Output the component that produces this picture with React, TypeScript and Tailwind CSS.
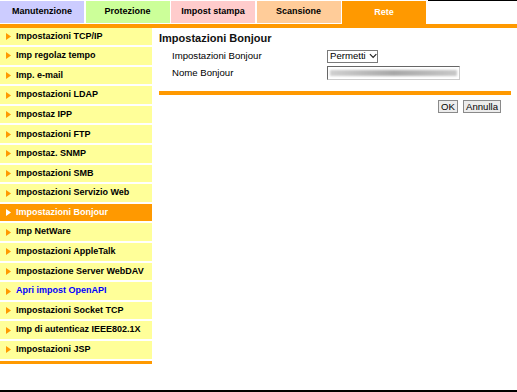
import React from 'react'

const TABS = [
  { label: 'Manutenzione', bg: 'bg-[#ccccff]', active: false },
  { label: 'Protezione', bg: 'bg-[#ccff99]', active: false },
  { label: 'Impost stampa', bg: 'bg-[#ffcccc]', active: false },
  { label: 'Scansione', bg: 'bg-[#ffcc99]', active: false },
  { label: 'Rete', bg: 'bg-[#ff9900]', active: true },
]

const MENU = [
  'Impostazioni TCP/IP',
  'Imp regolaz tempo',
  'Imp. e-mail',
  'Impostazioni LDAP',
  'Impostaz IPP',
  'Impostazioni FTP',
  'Impostaz. SNMP',
  'Impostazioni SMB',
  'Impostazioni Servizio Web',
  'Impostazioni Bonjour',
  'Imp NetWare',
  'Impostazioni AppleTalk',
  'Impostazione Server WebDAV',
  'Apri impost OpenAPI',
  'Impostazioni Socket TCP',
  'Imp di autenticaz IEEE802.1X',
  'Impostazioni JSP',
]

function Arrow({ color }: { color: string }) {
  return (
    <svg width="5" height="7" viewBox="0 0 5 7" className="shrink-0">
      <polygon points="0,0 5,3.5 0,7" fill={color} />
    </svg>
  )
}

function MenuItem({ label }: { label: string }) {
  const active = label === 'Impostazioni Bonjour'
  const link = label === 'Apri impost OpenAPI'
  return (
    <div
      className={`flex items-center h-[17.6px] mb-[2px] pl-[6px] ${
        active ? 'bg-[#ff9900]' : 'bg-[#ffff99]'
      }`}
    >
      <Arrow color={active ? '#ffffff' : '#ff9900'} />
      <span
        className={`ml-[5px] text-[9px] font-bold whitespace-nowrap ${
          active ? 'text-white' : link ? 'text-[#0000ff]' : 'text-black'
        }`}
      >
        {label}
      </span>
    </div>
  )
}

export default function App() {
  return (
    <div
      className="w-[517px] h-[392px] bg-white flex flex-col border-b-2 border-black overflow-hidden"
      style={{ fontFamily: '"Liberation Sans", Arial, sans-serif' }}
    >
      {/* Top tabs */}
      <div className="flex h-[24px] gap-[1.5px]">
        {TABS.map((t) => (
          <div
            key={t.label}
            className={`w-[84px] mt-[1px] flex items-center justify-center text-[9px] font-bold ${t.bg} ${
              t.active ? 'h-[23px] text-white' : 'h-[22px] text-black'
            }`}
          >
            {t.label}
          </div>
        ))}
        <div className="flex-1 border-t border-black" />
      </div>
      <div className="h-[3.5px] bg-[#ff9900]" />

      <div className="flex flex-1">
        {/* Sidebar */}
        <div className="w-[152px] flex flex-col">
          {MENU.map((m) => (
            <MenuItem key={m} label={m} />
          ))}
          <div className="h-[3px] mt-[0.5px] bg-[#ff9900]" />
        </div>

        {/* Content */}
        <div className="flex-1 pl-[7px] pr-[6px]">
          <div className="mt-[3px] h-[16px] flex items-center text-[11px] font-bold text-[#111]">
            Impostazioni Bonjour
          </div>
          <div className="mt-[2.5px] flex flex-col gap-[3px] pl-[13px] text-[9.6px] text-black">
            <div className="flex items-center h-[14px]">
              <div className="w-[155px]">Impostazioni Bonjour</div>
              <div className="h-[13px] w-[51px] border border-[#7a7a7a] bg-white flex items-center pl-[2px] text-[9.6px]">
                <span>Permetti</span>
                <svg width="9" height="6" viewBox="0 0 9 6" className="ml-[3px]">
                  <polyline points="1,1 4.5,4.5 8,1" fill="none" stroke="#222" strokeWidth="1.3" />
                </svg>
              </div>
            </div>
            <div className="flex items-center h-[14px]">
              <div className="w-[155px]">Nome Bonjour</div>
              <div className="h-[14px] w-[133px] border border-t-[#666] border-l-[#666] border-r-[#ccc] border-b-[#ccc] bg-white flex items-center px-[2px]">
                <div className="h-[6px] w-full bg-gradient-to-r from-[#d0d0d0] via-[#a8a8a8] to-[#c8c8c8] blur-[1px]" />
              </div>
            </div>
          </div>
          <div className="mt-[11px] h-[4px] bg-[#ff9900] w-[352px]" />
          <div className="mt-[5px] flex justify-end gap-[5px] w-[342px]">
            <button className="h-[13px] w-[20px] border border-[#8a8a8a] bg-[#ececec] text-[9.6px] leading-none text-black">
              OK
            </button>
            <button className="h-[13px] w-[38px] border border-[#8a8a8a] bg-[#ececec] text-[9.6px] leading-none text-black">
              Annulla
            </button>
          </div>
        </div>
      </div>
    </div>
  )
}
